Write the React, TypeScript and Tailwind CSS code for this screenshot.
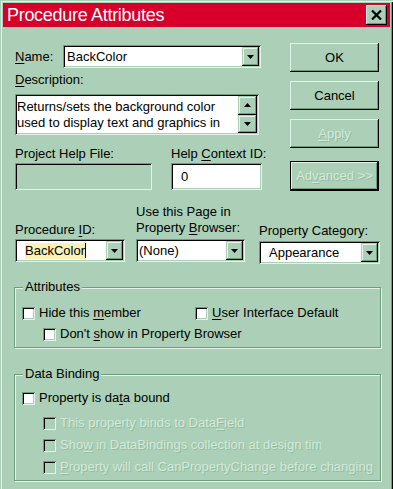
import React from 'react';

const font = { fontFamily: '"Liberation Sans", Arial, sans-serif' };

function U({ children }: { children: React.ReactNode }) {
  return <span className="underline underline-offset-2">{children}</span>;
}

function Arrow() {
  return (
    <div className="w-[17px] h-full flex items-center justify-center bg-[#abd0b7] shadow-[inset_-1px_-1px_0_#000,inset_1px_1px_0_#abd0b7,inset_-2px_-2px_0_#6e9c7c,inset_2px_2px_0_#e4f2e8]">
      <svg width="7" height="4" viewBox="0 0 7 4"><path d="M0 0H7L3.5 4Z" fill="#000" /></svg>
    </div>
  );
}

function UpArrow() {
  return (
    <div className="flex-1 w-full flex items-center justify-center bg-[#abd0b7] shadow-[inset_-1px_-1px_0_#000,inset_1px_1px_0_#abd0b7,inset_-2px_-2px_0_#6e9c7c,inset_2px_2px_0_#e4f2e8]">
      <svg width="7" height="4" viewBox="0 0 7 4"><path d="M0 4H7L3.5 0Z" fill="#000" /></svg>
    </div>
  );
}

function DownArrow() {
  return (
    <div className="flex-1 w-full flex items-center justify-center bg-[#abd0b7] shadow-[inset_-1px_-1px_0_#000,inset_1px_1px_0_#abd0b7,inset_-2px_-2px_0_#6e9c7c,inset_2px_2px_0_#e4f2e8]">
      <svg width="7" height="4" viewBox="0 0 7 4"><path d="M0 0H7L3.5 4Z" fill="#000" /></svg>
    </div>
  );
}

function Button({ children, disabled, def }: { children: React.ReactNode; disabled?: boolean; def?: boolean }) {
  const inner = (
    <div
      className={
        'w-full h-full flex items-center justify-center bg-[#abd0b7] shadow-[inset_-1px_-1px_0_#000,inset_1px_1px_0_#e4f2e8,inset_-2px_-2px_0_#6e9c7c] ' +
        (disabled ? 'text-[#d3e9da] [text-shadow:1px_1px_0_#93bca0]' : 'text-black')
      }
    >
      {children}
    </div>
  );
  if (def) {
    return <div className="w-[89px] h-[30px] border border-black">{inner}</div>;
  }
  return <div className="w-[89px] h-[29px]">{inner}</div>;
}

function Check({
  label,
  disabled,
  className,
  labelClass,
}: {
  label: React.ReactNode;
  disabled?: boolean;
  className?: string;
  labelClass?: string;
}) {
  return (
    <div className={'flex items-center h-[16px] ' + (className || '')}>
      <div
        className={
          'w-[13px] h-[13px] shrink-0 shadow-[inset_1px_1px_0_#6e9c7c,inset_-1px_-1px_0_#e4f2e8,inset_2px_2px_0_#000,inset_-2px_-2px_0_#abd0b7] ' +
          (disabled ? 'bg-[#abd0b7]' : 'bg-white')
        }
      />
      <span
        className={
          'ml-[4px] whitespace-nowrap ' +
          (disabled ? 'text-[#d3e9da] [text-shadow:1px_1px_0_#93bca0] ' : 'text-black ') +
          (labelClass || '')
        }
      >
        {label}
      </span>
    </div>
  );
}

const sunken =
  'shadow-[inset_1px_1px_0_#6e9c7c,inset_-1px_-1px_0_#e4f2e8,inset_2px_2px_0_#000,inset_-2px_-2px_0_#abd0b7]';

export default function App() {
  return (
    <div
      style={font}
      className="w-[393px] h-[489px] bg-[#abd0b7] text-[13px] leading-[16px] text-black overflow-hidden flex flex-col shadow-[inset_1px_1px_0_#abd0b7,inset_2px_2px_0_#e4f2e8,inset_-1px_0_0_#000,inset_-2px_0_0_#6e9c7c] pl-[3px] pr-[3px] pt-[3px]"
    >
      {/* Title bar */}
      <div className="h-[24px] bg-[#d6002a] flex items-center justify-between pl-[4px] pr-[3px]">
        <span className="text-white text-[18px] tracking-[-0.3px] leading-[24px]">Procedure Attributes</span>
        <div className="w-[21px] h-[20px] flex items-center justify-center bg-[#abd0b7] shadow-[inset_-1px_-1px_0_#000,inset_1px_1px_0_#e4f2e8,inset_-2px_-2px_0_#6e9c7c]">
          <svg width="11" height="10" viewBox="0 0 11 10">
            <path d="M1 0.5L10 9.5M10 0.5L1 9.5" stroke="#000" strokeWidth="2.2" />
          </svg>
        </div>
      </div>

      <div className="pl-[12px] flex flex-col">
        {/* Top section */}
        <div className="flex mt-[16px]">
          <div className="w-[247px] flex flex-col">
            <div className="flex items-center mt-[2px] h-[23px]">
              <span className="w-[48px]"><U>N</U>ame:</span>
              <div className={'w-[198px] h-[23px] bg-white flex p-[2px] ' + sunken}>
                <span className="flex-1 pl-[2px] leading-[19px]">BackColor</span>
                <Arrow />
              </div>
            </div>
            <div className="mt-[4px] h-[16px]"><U>D</U>escription:</div>
            <div className={'mt-[6px] w-[244px] h-[41px] bg-white flex p-[2px] ' + sunken}>
              <div className="flex-1 pl-[0px] pt-[3px] leading-[16px] whitespace-nowrap overflow-hidden">
                <div>Returns/sets the background color</div>
                <div>used to display text and graphics in</div>
              </div>
              <div className="w-[19px] h-full flex flex-col">
                <UpArrow />
                <DownArrow />
              </div>
            </div>
            <div className="flex mt-[11px]">
              <div className="w-[137px] flex flex-col">
                <span className="h-[16px]">Project Help File:</span>
                <div className={'mt-[1px] h-[27px] w-[137px] bg-[#abd0b7] ' + sunken} />
              </div>
              <div className="ml-[19px] w-[91px] flex flex-col">
                <span className="h-[16px] whitespace-nowrap">Help <U>C</U>ontext ID:</span>
                <div className={'mt-[1px] h-[27px] w-[91px] bg-white pl-[10px] leading-[27px] ' + sunken}>0</div>
              </div>
            </div>
          </div>
          <div className="ml-[28px] flex flex-col">
            <Button>OK</Button>
            <div className="mt-[9px]"><Button>Cancel</Button></div>
            <div className="mt-[9px]"><Button disabled><span><U>A</U>pply</span></Button></div>
            <div className="mt-[13px]"><Button disabled def><span>Ad<U>v</U>anced &gt;&gt;</span></Button></div>
          </div>
        </div>

        {/* Combo row */}
        <div className="flex items-end mt-[13px]">
          <div className="w-[110px] flex flex-col mb-[2px]">
            <span className="h-[16px] whitespace-nowrap">Procedure <U>I</U>D:</span>
            <div className={'mt-[1px] w-[110px] h-[23px] bg-white flex p-[2px] ' + sunken}>
              <div className="flex-1 pl-[8px] flex items-center">
                <span className="bg-[#faf2b4] leading-[16px]">BackColor</span>
                <span className="w-[1px] h-[15px] bg-black" />
              </div>
              <Arrow />
            </div>
          </div>
          <div className="ml-[11px] w-[109px] flex flex-col mb-[2px]">
            <span className="h-[16px] whitespace-nowrap">Use this Page in</span>
            <span className="h-[16px] whitespace-nowrap">Property <U>B</U>rowser:</span>
            <div className={'mt-[3px] w-[109px] h-[23px] bg-white flex p-[2px] ' + sunken}>
              <span className="flex-1 pl-[1px] leading-[19px]">(None)</span>
              <Arrow />
            </div>
          </div>
          <div className="ml-[14px] w-[121px] flex flex-col">
            <span className="h-[16px] whitespace-nowrap">Property Category:</span>
            <div className={'mt-[2px] w-[121px] h-[23px] bg-white flex p-[2px] ' + sunken}>
              <span className="flex-1 pl-[8px] leading-[19px]">Appearance</span>
              <Arrow />
            </div>
          </div>
        </div>

        {/* Attributes */}
        <div className="relative mt-[23px] -ml-[1px] w-[367px] h-[61px] border border-[#6e9c7c] shadow-[inset_1px_1px_0_#e4f2e8,1px_1px_0_#e4f2e8] pl-[7px] pt-[17px]">
          <span className="absolute -top-[9px] left-[8px] px-[2px] bg-[#abd0b7] leading-[16px]">Attributes</span>
          <div className="flex">
            <Check className="w-[173px]" label={<>Hide this <U>m</U>ember</>} />
            <Check label={<><U>U</U>ser Interface Default</>} />
          </div>
          <Check className="mt-[5px] ml-[21px]" label={<>Don't <U>s</U>how in Property Browser</>} />
        </div>

        {/* Data Binding */}
        <div className="relative mt-[26px] -ml-[1px] w-[367px] h-[107px] border border-[#6e9c7c] shadow-[inset_1px_1px_0_#e4f2e8,1px_1px_0_#e4f2e8] pl-[7px] pt-[15px]">
          <span className="absolute -top-[9px] left-[8px] px-[2px] bg-[#abd0b7] leading-[16px]">Data Binding</span>
          <Check label={<>Property is da<U>t</U>a bound</>} />
          <Check disabled className="mt-[9px] ml-[21px]" label={<>This property binds to Data<U>F</U>ield</>} />
          <Check
            disabled
            className="mt-[6px] ml-[21px]"
            labelClass="w-[261px] overflow-hidden"
            label={<>Sho<U>w</U> in DataBindings collection at design time</>}
          />
          <Check disabled className="mt-[6px] ml-[21px]" label={<><U>P</U>roperty will call CanPropertyChange before changing</>} />
        </div>
      </div>
    </div>
  );
}
